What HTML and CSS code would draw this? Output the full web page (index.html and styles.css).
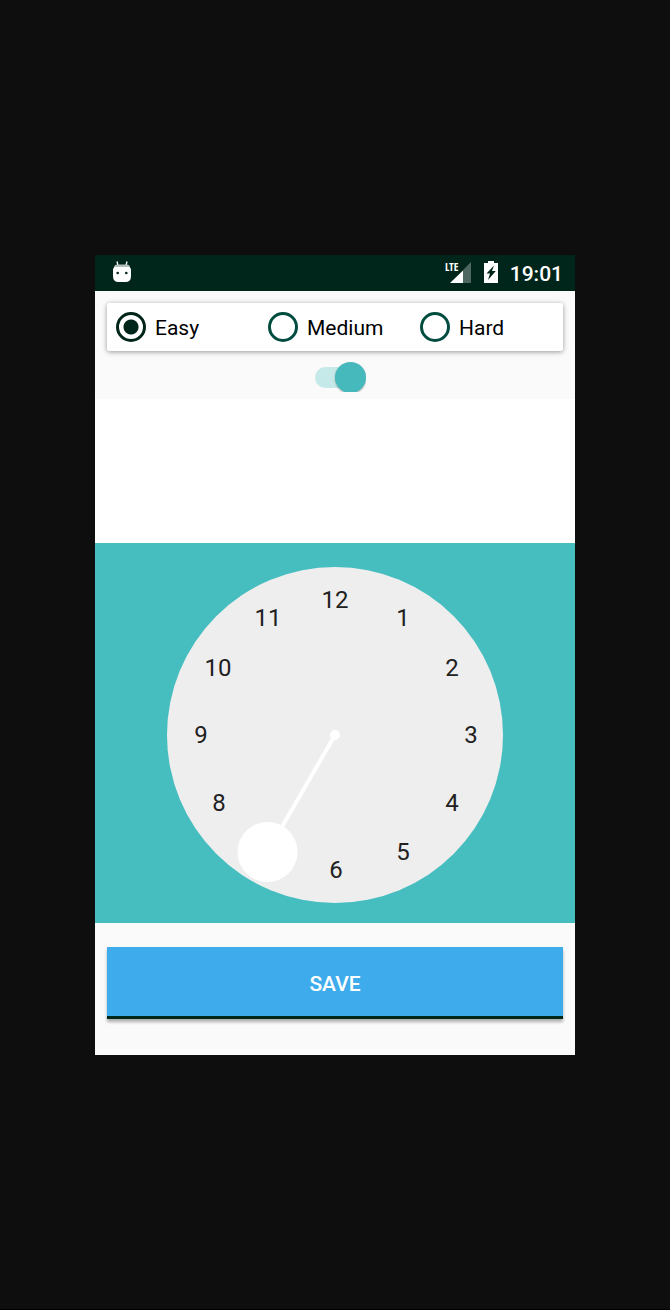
FILE: index.html
```html
<!DOCTYPE html>
<html lang="en">
<head>
<meta charset="utf-8">
<meta name="viewport" content="width=device-width, initial-scale=1">
<title>Alarm</title>
<link rel="stylesheet" href="styles.css">
</head>
<body>
<main class="phone">
  <header class="status">
    <svg class="robot" viewBox="0 0 20 22" width="20" height="22" aria-hidden="true">
      <path d="M5 0.500 L6 4.500 M15 0.500 L14 4.500" stroke="#fff" stroke-width="1.300" fill="none"/>
      <path d="M2 7 V5.500 Q3 3.500 5 3.500 H15 Q17 3.500 18 5.500 V7 Z" fill="#b3bfbb"/>
      <path d="M2.500 6 H17.500 Q19 7 19 9 V15 Q19 21 13.500 21 H6.500 Q1 21 1 15 V9 Q1 7 2.500 6 Z" fill="#fff"/>
      <circle cx="5.700" cy="12" r="1.300" fill="#00251a"/>
      <circle cx="14.300" cy="12" r="1.300" fill="#00251a"/>
    </svg>
    <div class="indicators">
      <svg class="signal" viewBox="0 0 28 24" width="28" height="24" role="img" aria-label="LTE signal">
        <path d="M27 2 V23 H19 V10 Z" fill="#4d665f"/>
        <path d="M19 10.500 V23 H6 Z" fill="#fff"/>
        <text class="network" x="1" y="11">LTE</text>
      </svg>
      <svg class="battery" viewBox="0 0 14 22" width="14" height="22" aria-hidden="true">
        <path d="M4 0 H10 V2 H14 V22 H0 V2 H4 Z" fill="#fff"/>
        <path d="M10 4.500 L2.500 12.500 H6 L4 19 L11.800 10 H8 Z" fill="#00251a"/>
      </svg>
      <time class="time">19:01</time>
    </div>
  </header>

  <form class="screen">
    <fieldset class="levels" aria-label="Difficulty">
      <label class="level"><input class="radio" type="radio" name="level" checked><span class="level-name">Easy</span></label>
      <label class="level"><input class="radio" type="radio" name="level"><span class="level-name">Medium</span></label>
      <label class="level"><input class="radio" type="radio" name="level"><span class="level-name">Hard</span></label>
    </fieldset>
    <div class="toggle">
      <input class="switch" type="checkbox" role="switch" aria-label="Alarm enabled" checked>
    </div>
    <div class="header"></div>
    <div class="picker">
      <svg class="clock" viewBox="0 0 336 336" role="img" aria-label="Hour picker, 7 selected">
        <circle cx="168" cy="168" r="168" fill="#eeeeee"/>
        <g class="numbers">
          <text x="168" y="41">12</text>
          <text x="236" y="59">1</text>
          <text x="285" y="109">2</text>
          <text x="304" y="176">3</text>
          <text x="285" y="244">4</text>
          <text x="236" y="293">5</text>
          <text x="169" y="311">6</text>
          <text x="52" y="244">8</text>
          <text x="34" y="176">9</text>
          <text x="51" y="109">10</text>
          <text x="101" y="59">11</text>
        </g>
        <path d="M168 168 L100.500 285" stroke="#fff" stroke-width="4"/>
        <circle cx="168" cy="168" r="5" fill="#fff"/>
        <circle cx="100.500" cy="285" r="30" fill="#fff"/>
      </svg>
    </div>
    <div class="actions">
      <button class="save" type="button">SAVE</button>
    </div>
  </form>
</main>
</body>
</html>
```
FILE: styles.css
```css
* { box-sizing: border-box; }

body {
  margin: 0;
  min-height: 100vh;
  display: grid;
  align-items: center;
  padding: 0 95px;
  background: #0e0e0e;
  box-shadow: inset 0 -1px #000;
  font-family: Roboto, "Liberation Sans", sans-serif;
}

.phone {
  width: 100%;
  max-width: 480px;
  margin: 0 auto;
  background: #fafafa;
}

.status {
  display: flex;
  justify-content: space-between;
  align-items: center;
  height: 36px;
  padding: 0 12px 0 17px;
  background: #00251a;
  color: #fff;
}

.robot { margin-bottom: 2px; }

.indicators {
  display: flex;
  align-items: center;
  gap: 12px;
}

.signal,
.battery { margin-bottom: 2px; }

.network {
  font-family: "Liberation Sans Narrow", "Open Sans Condensed", Roboto, sans-serif;
  font-size: 11px;
  font-weight: 700;
  fill: #fff;
}

.time {
  padding-top: 2px;
  font-size: 21px;
  font-weight: 500;
  line-height: 34px;
}

.levels {
  display: grid;
  grid-template-columns: repeat(3, 1fr);
  margin: 12px 12px 0;
  padding: 0;
  border: 0;
  border-radius: 3px;
  background: #fff;
  box-shadow: 0 1px 5px rgba(0, 0, 0, 0.4);
}

.level {
  display: flex;
  align-items: center;
  gap: 9px;
  height: 48px;
  padding-left: 9px;
  font-size: 21px;
  color: #000;
}

.level-name { padding-top: 2px; }

.radio {
  appearance: none;
  width: 30px;
  height: 30px;
  margin: 0;
  border: 3px solid #004d40;
  border-radius: 50%;
}

.radio:checked {
  border-color: #00251a;
  background: radial-gradient(circle, #00251a 7px, transparent 8px);
}

.toggle {
  display: flex;
  justify-content: center;
  height: 48px;
  padding: 11px 0 0 10px;
}

.switch {
  appearance: none;
  display: flex;
  align-items: flex-start;
  width: 51px;
  height: 30px;
  margin: 0;
  overflow: hidden;
}

.switch::before {
  content: "";
  width: 40px;
  height: 21px;
  margin: 5px -20px 0 0;
  flex: none;
  border-radius: 11px;
  background: #c5e9e8;
}

.switch::after {
  content: "";
  width: 31px;
  height: 31px;
  flex: none;
  border-radius: 50%;
  background: #46b9bd;
  box-shadow: 0 1px 2px rgba(0, 0, 0, 0.3);
}

.header {
  height: 144px;
  background: #fff;
}

.picker {
  padding: 24px 72px 20px;
  background: #46bdbf;
}

.clock {
  display: block;
  width: 100%;
}

.numbers {
  font-size: 24px;
  text-anchor: middle;
  fill: #212121;
}

.actions { padding: 24px 12px 36px; }

.save {
  display: block;
  width: 100%;
  height: 72px;
  padding: 5px 0 0;
  border: 0;
  border-bottom: 3px solid #00251a;
  background: #3eacec;
  box-shadow: 0 3px 3px rgba(0, 0, 0, 0.3);
  color: #fff;
  font-family: inherit;
  font-size: 21px;
  font-weight: 500;
}
```
